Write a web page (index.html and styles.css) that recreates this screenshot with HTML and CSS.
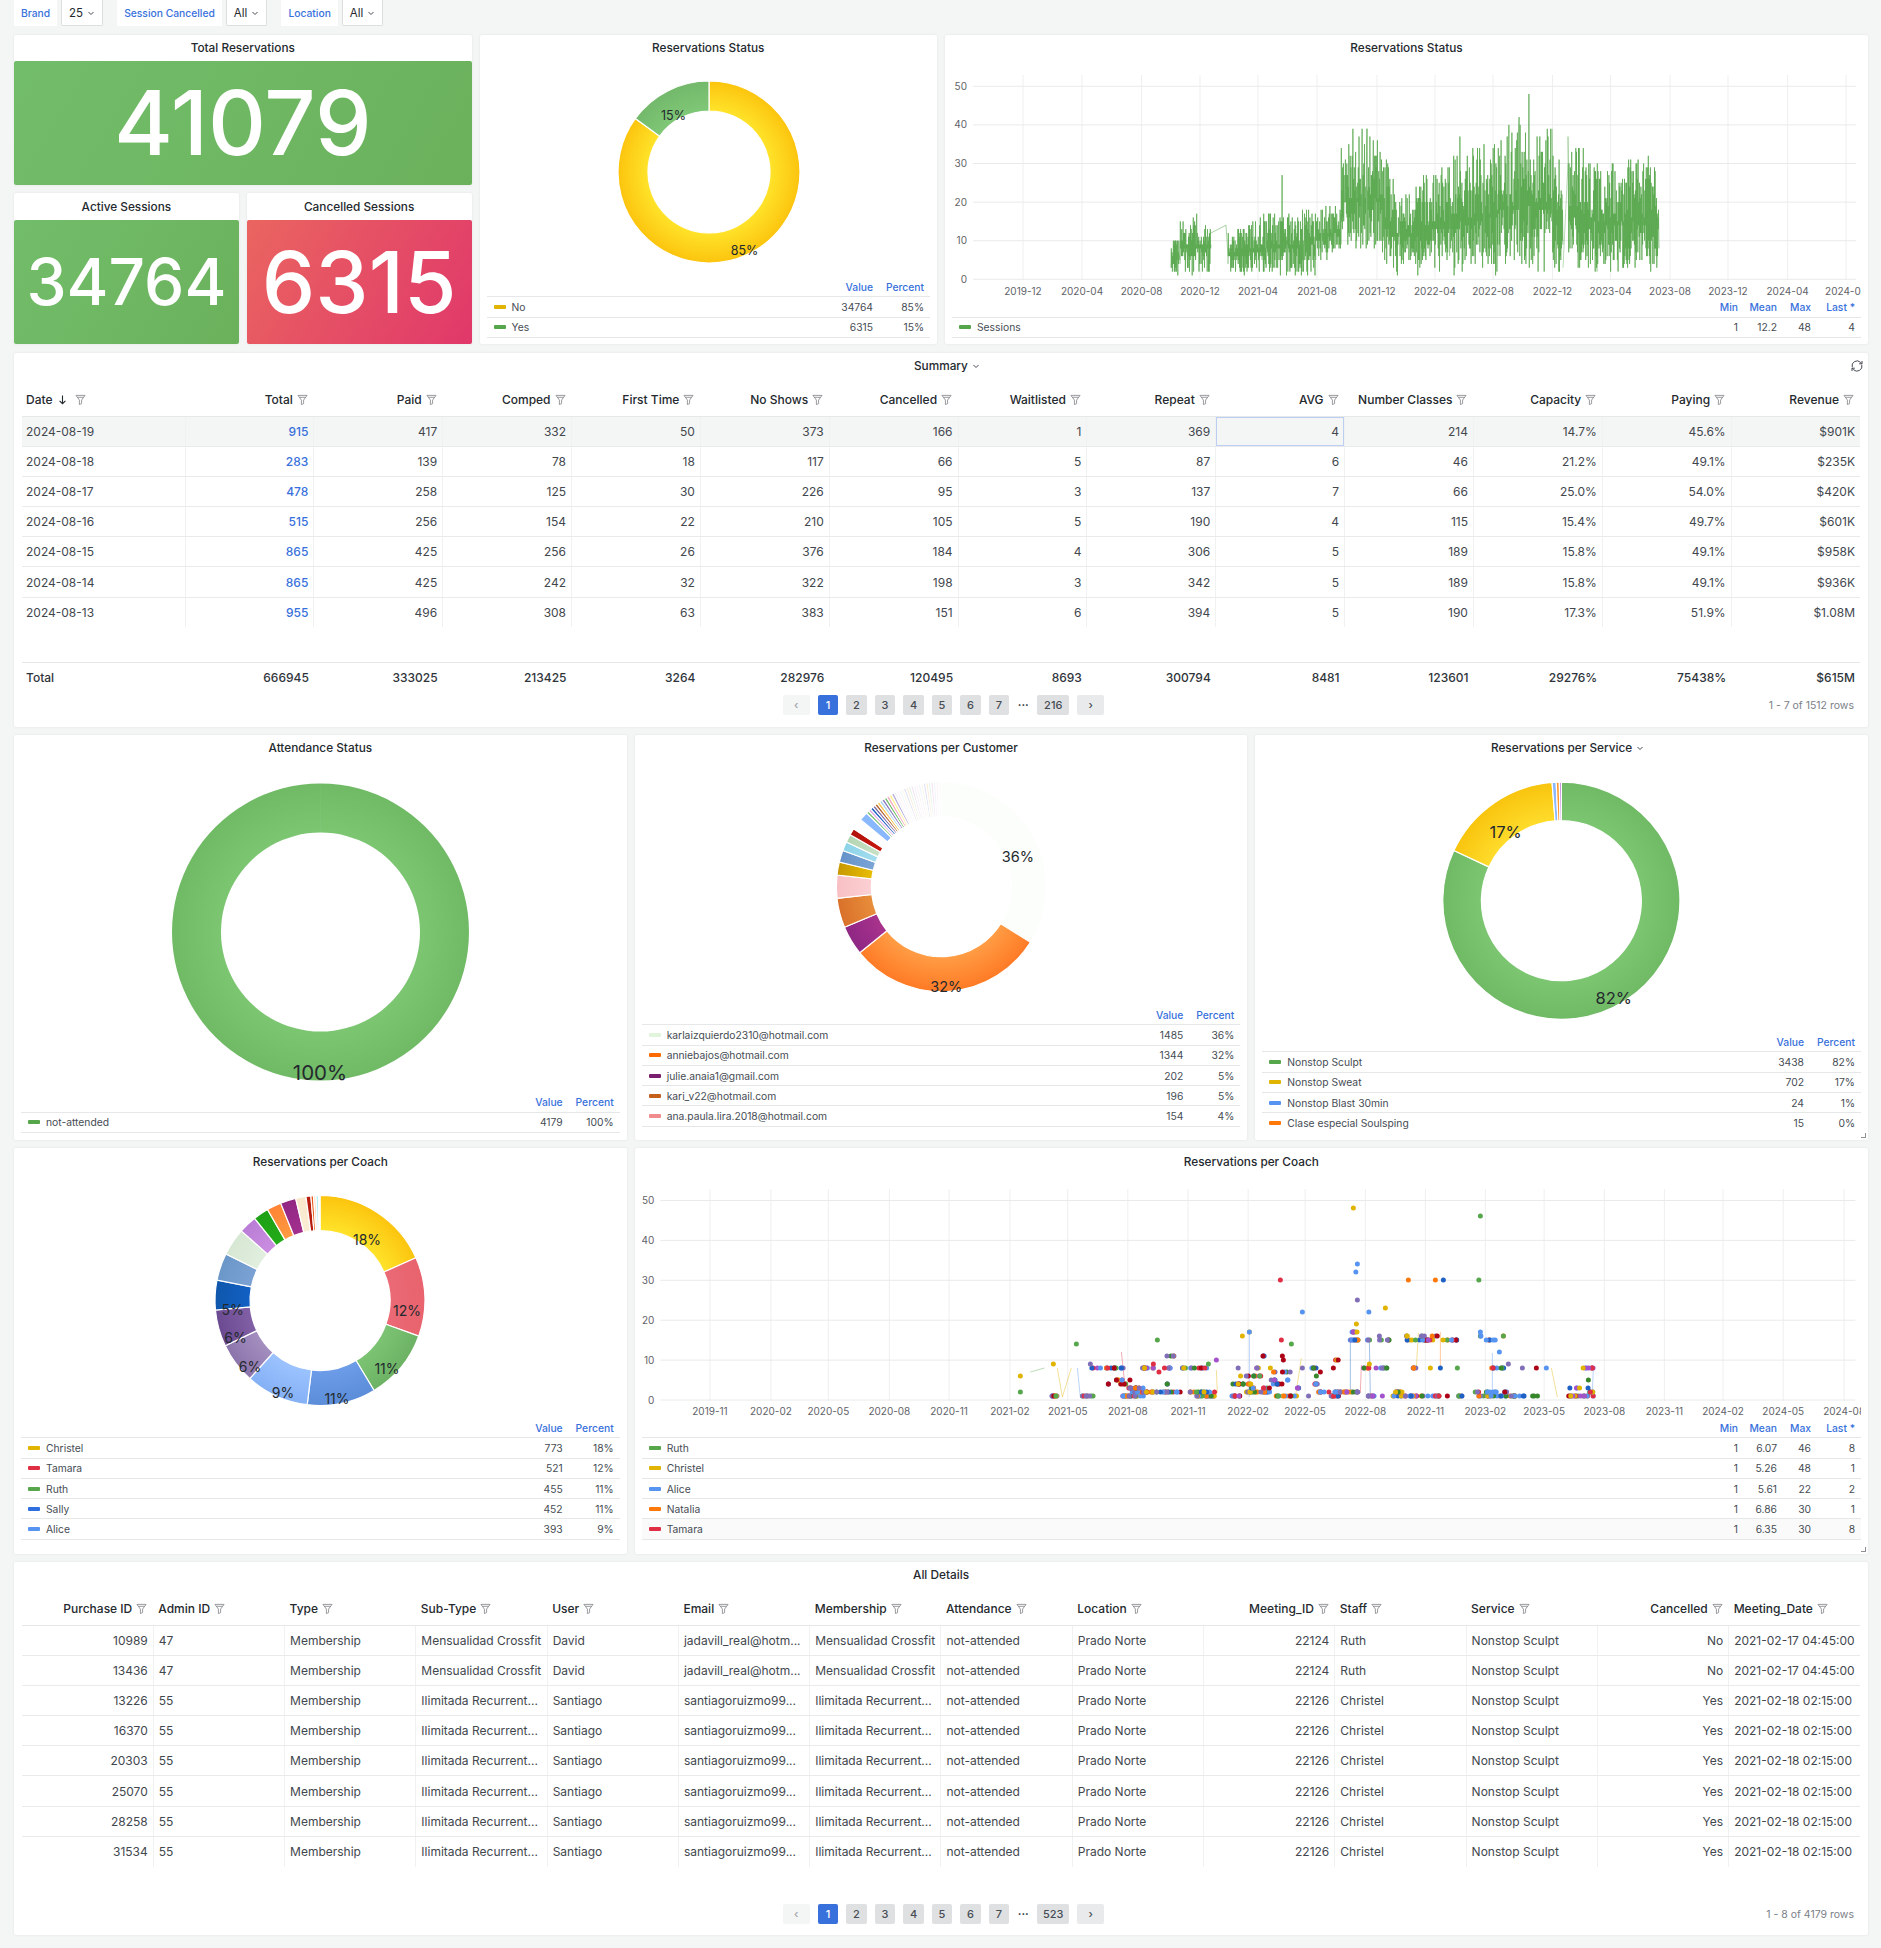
FILE: index.html
```html
<!DOCTYPE html>
<html>
  <head>
    <meta charset="utf-8">
    <title>Reservations</title>
    <link rel="stylesheet" href="styles.css">
  </head>
  <body>
    <div class="filters">
      <div class="filter-name">Brand</div>
      <div class="filter-value">25 <svg class="chev" viewBox="0 0 8 8"><path d="M1.5 3 4 5.5 6.5 3"/></svg></div>
      <div class="filter-name spaced">Session Cancelled</div>
      <div class="filter-value">All <svg class="chev" viewBox="0 0 8 8"><path d="M1.5 3 4 5.5 6.5 3"/></svg></div>
      <div class="filter-name spaced">Location</div>
      <div class="filter-value">All <svg class="chev" viewBox="0 0 8 8"><path d="M1.5 3 4 5.5 6.5 3"/></svg></div>
    </div>

    <main class="dash">
      <section class="panel total-res">
        <div class="title">Total Reservations</div>
        <div class="stat green huge">41079</div>
      </section>
      <section class="panel active-res">
        <div class="title">Active Sessions</div>
        <div class="stat green small">34764</div>
      </section>
      <section class="panel cancelled-res">
        <div class="title">Cancelled Sessions</div>
        <div class="stat red big">6315</div>
      </section>

      <section class="panel status-pie">
        <div class="title">Reservations Status</div>
        <div class="chart"><svg id="statusPie"></svg></div>
        <div class="legend pie" id="statusLegend"></div>
      </section>
      <section class="panel status-line">
        <div class="title">Reservations Status</div>
        <div class="chart"><svg id="statusLine"></svg></div>
        <div class="legend stats" id="lineLegend"></div>
      </section>

      <section class="panel summary">
        <div class="title">Summary <svg class="chev" viewBox="0 0 8 8"><path d="M1.5 3 4 5.5 6.5 3"/></svg>
          <svg class="refresh" viewBox="0 0 14 14"><path d="M2.2 8.2A5 5 0 0 1 10.6 3.4L12 4.8M11.8 5.8A5 5 0 0 1 3.4 10.6L2 9.2"/><path d="M12 2v2.8H9.2M2 12V9.2h2.8"/></svg>
        </div>
        <div class="table-box"><table class="grid" id="summaryTable"></table></div>
        <table class="grid totals" id="summaryTotals"></table>
        <div class="pager">
          <div class="pages" id="summaryPages"></div>
          <div class="count">1 - 7 of 1512 rows</div>
        </div>
      </section>

      <section class="panel attendance">
        <div class="title">Attendance Status</div>
        <div class="chart"><svg id="attendancePie"></svg></div>
        <div class="legend pie" id="attendanceLegend"></div>
      </section>
      <section class="panel customer">
        <div class="title">Reservations per Customer</div>
        <div class="chart"><svg id="customerPie"></svg></div>
        <div class="legend pie cut-five" id="customerLegend"></div>
      </section>
      <section class="panel service">
        <div class="title">Reservations per Service <svg class="chev" viewBox="0 0 8 8"><path d="M1.5 3 4 5.5 6.5 3"/></svg></div>
        <div class="chart"><svg id="servicePie"></svg></div>
        <div class="legend pie cut-four" id="serviceLegend"></div>
        <div class="resize"></div>
      </section>

      <section class="panel coach-pie">
        <div class="title">Reservations per Coach</div>
        <div class="chart"><svg id="coachPie"></svg></div>
        <div class="legend pie cut-five" id="coachLegend"></div>
      </section>
      <section class="panel coach-dots">
        <div class="title">Reservations per Coach</div>
        <div class="chart"><svg id="coachDots"></svg></div>
        <div class="legend stats cut-five" id="dotsLegend"></div>
        <div class="resize"></div>
      </section>

      <section class="panel details">
        <div class="title">All Details</div>
        <div class="table-box"><table class="grid" id="detailsTable"></table></div>
        <div class="pager">
          <div class="pages" id="detailsPages"></div>
          <div class="count">1 - 8 of 4179 rows</div>
        </div>
      </section>
    </main>

    <script src="app.js"></script>
  </body>
</html>
```

FILE: styles.css
```css
html {
  background: #f4f5f5;
  color: #24292e;
  font-family: Inter, "Liberation Sans", sans-serif;
  font-size: 12px;
}
body {
  margin: 0;
}
.filters {
  display: flex;
  height: 26px;
  margin-bottom: 9px;
  padding-left: 14px;
  font-size: 10.3px;
}
.filter-name {
  display: flex;
  align-items: center;
  margin-right: 4px;
  padding: 0 7px;
  background: white;
  color: #3871dc;
  font-weight: 500;
}
.filter-name.spaced {
  margin-left: 14px;
}
.filter-value {
  display: flex;
  align-items: center;
  gap: 4px;
  padding: 0 7px;
  background: white;
  border: 1px solid #dcdee0;
  border-top: 0;
  border-radius: 0 0 2px 2px;
  font-size: 11.5px;
}
.chev {
  width: 8px;
  height: 8px;
  fill: none;
  stroke: #464c54;
  stroke-width: 1;
}

.dash {
  display: grid;
  grid-template-columns: repeat(24, 1fr);
  grid-template-rows: 150px 152px 374px 405px 406px 373px;
  gap: 8px;
  padding: 0 13px 13px 14px;
}
.panel {
  display: flex;
  flex-direction: column;
  position: relative;
  min-width: 0;
  background: white;
  border-radius: 2px;
  box-shadow: 0 0 3px rgba(36, 41, 46, 0.08);
}
.total-res { grid-column: 1 / span 6; grid-row: 1; }
.active-res { grid-column: 1 / span 3; grid-row: 2; margin-bottom: 1px; }
.cancelled-res { grid-column: 4 / span 3; grid-row: 2; margin-bottom: 1px; }
.status-pie { grid-column: 7 / span 6; grid-row: 1 / span 2; margin-bottom: 1px; }
.status-line { grid-column: 13 / span 12; grid-row: 1 / span 2; margin-bottom: 1px; }
.summary { grid-column: 1 / -1; }
.attendance, .customer, .service, .coach-pie { grid-column: span 8; }
.coach-dots { grid-column: span 16; }
.details { grid-column: 1 / -1; }

.title {
  flex: none;
  position: relative;
  height: 26px;
  line-height: 26px;
  text-align: center;
  font-size: 11.8px;
  font-weight: 500;
}
.active-res .title, .cancelled-res .title {
  height: 27px;
  line-height: 28px;
}
.coach-pie .title, .coach-dots .title {
  line-height: 28px;
}
.title .chev {
  margin: 0 -12px 0 1px;
}
.refresh {
  position: absolute;
  top: 6px;
  right: 4px;
  width: 14px;
  height: 14px;
  fill: none;
  stroke: #464c54;
  stroke-width: 1;
}

.stat {
  flex: 1;
  display: flex;
  justify-content: center;
  align-items: center;
  color: white;
  font-weight: 500;
  line-height: 1;
  border-radius: 2px;
}
.stat.green {
  background: linear-gradient(120deg, #72bd6a, #6bb15c);
}
.stat.red {
  background: linear-gradient(120deg, #ea6560, #e0386a);
}
.stat.huge { font-size: 90px; }
.stat.small { font-size: 64px; }
.stat.big { font-size: 85px; }

.chart {
  flex: 1;
  min-height: 0;
  margin: 0 7px;
}
.chart svg {
  display: block;
  width: 100%;
  height: 100%;
}
.axis {
  fill: #5f6369;
  font-size: 10px;
}
.slice-label {
  fill: #24292e;
  text-anchor: middle;
  dominant-baseline: central;
}

.legend {
  flex: none;
  margin: 0 7px 7px;
  overflow: hidden;
  font-size: 10.3px;
  color: #464c54;
}
.status-pie .legend, .status-line .legend {
  margin-bottom: 6px;
}
.legend.cut-five { height: 127px; margin-bottom: 8px; }
.legend.cut-four { height: 100px; margin-bottom: 8px; }
.coach-pie .legend.cut-five, .coach-dots .legend.cut-five { height: 128px; }
.legend-row {
  display: grid;
  align-items: center;
  box-sizing: border-box;
  height: 20.3px;
  border-bottom: 1px solid #e6e7e8;
}
.legend.pie .legend-row {
  grid-template-columns: 1fr 60px 51px;
}
.legend.stats .legend-row {
  grid-template-columns: 1fr 32px 39px 34px 44px;
}
.legend-row > div {
  padding-right: 6px;
  text-align: right;
  white-space: nowrap;
}
.legend-row > .legend-name {
  display: flex;
  align-items: center;
  gap: 6px;
  padding-left: 7px;
  text-align: left;
}
.legend-row.head {
  color: #3871dc;
  font-weight: 500;
}
#dotsLegend .legend-row:nth-child(6) {
  background: #fafafa;
}
.swatch {
  width: 12px;
  height: 4px;
  border-radius: 1px;
}
.resize {
  position: absolute;
  right: 2px;
  bottom: 2px;
  width: 4px;
  height: 4px;
  border-right: 1px solid #8e9095;
  border-bottom: 1px solid #8e9095;
}

.table-box {
  flex: 1;
  min-height: 0;
  margin: 0 8px;
}
table.grid {
  table-layout: fixed;
  border-collapse: collapse;
  width: 100%;
  color: #42474e;
  font-size: 12px;
}
table.grid th {
  height: 37px;
  padding: 4px 6px 0 5px;
  box-sizing: border-box;
  border-bottom: 1px solid #e6e7e8;
  color: #24292e;
  font-weight: 500;
  text-align: left;
  white-space: nowrap;
}
table.grid td {
  height: 30.2px;
  padding: 0 5px;
  box-sizing: border-box;
  border-bottom: 1px solid #e9eaeb;
  border-right: 1px solid #f0f1f1;
  white-space: nowrap;
  overflow: hidden;
}
table.grid tr:last-child td {
  border-bottom: 0;
}
table.grid td:last-child {
  border-right: 0;
}
table.grid .num {
  text-align: right;
}
table.grid .first {
  padding-left: 4px;
}
table.grid tr.hover td {
  background: #f4f5f5;
}
table.grid td.focus {
  box-shadow: inset 0 0 0 1px #bccff3;
}
table.grid td.link {
  color: #3871dc;
  font-weight: 500;
}
.head-cell {
  display: inline-flex;
  align-items: center;
  gap: 4px;
  vertical-align: middle;
}
.funnel {
  width: 11px;
  height: 11px;
  fill: none;
  stroke: #8e9095;
  stroke-width: 1;
}
.sort {
  width: 11px;
  height: 11px;
  margin-right: 3px;
  fill: none;
  stroke: #24292e;
  stroke-width: 1.2;
}
table.totals {
  flex: none;
  width: auto;
  margin: 0 8px;
  border-top: 1px solid #e6e7e8;
}
table.totals td {
  height: 30px;
  border: 0;
  color: #2f343a;
  font-weight: 500;
}

.pager {
  flex: none;
  display: grid;
  grid-template-columns: 1fr auto 1fr;
  align-items: center;
  height: 20px;
  margin: 3px 14px 12px 14px;
}
.details .pager {
  margin-bottom: 11px;
}
.pages {
  grid-column: 2;
  display: flex;
  align-items: center;
  gap: 8px;
  margin-left: 5px;
  font-size: 11px;
}
.page {
  display: flex;
  justify-content: center;
  align-items: center;
  min-width: 20.5px;
  height: 20px;
  padding: 0 1px;
  box-sizing: border-box;
  background: #dfe0e2;
  border-radius: 2px;
  color: #464c54;
  font-weight: 500;
}
.page.wide { min-width: 32px; }
.page.on {
  background: #3871dc;
  color: white;
}
.page.arrow {
  min-width: 27px;
  background: #e9eaeb;
}
.page.arrow.off {
  background: #f4f5f5;
  color: #a0a3a8;
}
.page-dots {
  width: 12px;
  text-align: center;
  font-weight: 700;
}
.count {
  grid-column: 3;
  text-align: right;
  color: #7b8087;
  font-size: 10.5px;
}
```

FILE: app.js
```js
// seeded so the charts come out the same on every load
let seed = 20240819
function rand() {
  seed = (seed * 16807) % 2147483647
  return seed / 2147483647
}
function between(a, b) {
  return a + (b - a) * rand()
}

const funnel = '<svg class="funnel" viewBox="0 0 12 12"><path d="M1 1.5h10L7.2 6.6v3.9l-2.4 1V6.6Z"/><path d="M2.6 3.6h6.8"/></svg>'
const sortDown = '<svg class="sort" viewBox="0 0 12 12"><path d="M6 1.5v9M2.8 7.4 6 10.6l3.2-3.2"/></svg>'

/* ---------- tables ---------- */

const summaryCols = ['Date', 'Total', 'Paid', 'Comped', 'First Time', 'No Shows', 'Cancelled', 'Waitlisted', 'Repeat', 'AVG', 'Number Classes', 'Capacity', 'Paying', 'Revenue']
const summaryRows = [
  ['2024-08-19', 915, 417, 332, 50, 373, 166, 1, 369, 4, 214, '14.7%', '45.6%', '$901K'],
  ['2024-08-18', 283, 139, 78, 18, 117, 66, 5, 87, 6, 46, '21.2%', '49.1%', '$235K'],
  ['2024-08-17', 478, 258, 125, 30, 226, 95, 3, 137, 7, 66, '25.0%', '54.0%', '$420K'],
  ['2024-08-16', 515, 256, 154, 22, 210, 105, 5, 190, 4, 115, '15.4%', '49.7%', '$601K'],
  ['2024-08-15', 865, 425, 256, 26, 376, 184, 4, 306, 5, 189, '15.8%', '49.1%', '$958K'],
  ['2024-08-14', 865, 425, 242, 32, 322, 198, 3, 342, 5, 189, '15.8%', '49.1%', '$936K'],
  ['2024-08-13', 955, 496, 308, 63, 383, 151, 6, 394, 5, 190, '17.3%', '51.9%', '$1.08M']
]
const summaryTotal = ['Total', 666945, 333025, 213425, 3264, 282976, 120495, 8693, 300794, 8481, 123601, '29276%', '75438%', '$615M']

function colgroup(widths) {
  return '<colgroup>' + widths.map(w => `<col width="${w}">`).join('') + '</colgroup>'
}

const summaryWidths = [163].concat(Array(13).fill(128.85))
function fillSummary() {
  const head = summaryCols.map((name, i) => {
    if (i === 0) {
      return `<th class="first"><span class="head-cell">${name}${sortDown}${funnel}</span></th>`
    }
    return `<th class="num"><span class="head-cell">${name}${funnel}</span></th>`
  }).join('')
  const body = summaryRows.map((row, r) => {
    const cells = row.map((val, i) => {
      let cls = i === 0 ? 'first' : 'num'
      if (i === 1) cls += ' link'
      if (r === 0 && i === 9) cls += ' focus'
      return `<td class="${cls}">${val}</td>`
    }).join('')
    return `<tr class="${r === 0 ? 'hover' : ''}">${cells}</tr>`
  }).join('')
  document.getElementById('summaryTable').innerHTML = colgroup(summaryWidths) + `<tr>${head}</tr>` + body
  const totals = summaryTotal.map((val, i) => `<td class="${i === 0 ? 'first' : 'num'}">${val}</td>`).join('')
  const totalsTable = document.getElementById('summaryTotals')
  totalsTable.innerHTML = colgroup(summaryWidths) + `<tr>${totals}</tr>`
  totalsTable.style.width = '1838px'
}

const detailCols = ['Purchase ID', 'Admin ID', 'Type', 'Sub-Type', 'User', 'Email', 'Membership', 'Attendance', 'Location', 'Meeting_ID', 'Staff', 'Service', 'Cancelled', 'Meeting_Date']
const detailRight = [0, 9, 12]
const david = [47, 'Membership', 'Mensualidad Crossfit', 'David', 'jadavill_real@hotm...', 'Mensualidad Crossfit', 'not-attended', 'Prado Norte', 22124, 'Ruth', 'Nonstop Sculpt', 'No', '2021-02-17 04:45:00']
const santiago = [55, 'Membership', 'Ilimitada Recurrent...', 'Santiago', 'santiagoruizmo99...', 'Ilimitada Recurrent...', 'not-attended', 'Prado Norte', 22126, 'Christel', 'Nonstop Sculpt', 'Yes', '2021-02-18 02:15:00']
const detailRows = [
  [10989, ...david],
  [13436, ...david],
  [13226, ...santiago],
  [16370, ...santiago],
  [20303, ...santiago],
  [25070, ...santiago],
  [28258, ...santiago],
  [31534, ...santiago]
]

function fillDetails() {
  const head = detailCols.map((name, i) => {
    const cls = detailRight.includes(i) ? 'num' : ''
    return `<th class="${cls}"><span class="head-cell">${name}${funnel}</span></th>`
  }).join('')
  const body = detailRows.map(row => {
    const cells = row.map((val, i) => `<td class="${detailRight.includes(i) ? 'num' : ''}">${val}</td>`).join('')
    return `<tr>${cells}</tr>`
  }).join('')
  document.getElementById('detailsTable').innerHTML = `<tr>${head}</tr>` + body
}

function fillPages(id, last) {
  let html = '<div class="page arrow off">‹</div><div class="page on">1</div>'
  for (let i = 2; i <= 7; i++) {
    html += `<div class="page">${i}</div>`
  }
  html += `<div class="page-dots">···</div><div class="page wide">${last}</div><div class="page arrow">›</div>`
  document.getElementById(id).innerHTML = html
}

/* ---------- legends ---------- */

function fillLegend(id, cols, rows) {
  let html = '<div class="legend-row head"><div></div>' + cols.map(c => `<div>${c}</div>`).join('') + '</div>'
  rows.forEach(row => {
    const [color, name, ...vals] = row
    html += `<div class="legend-row"><div class="legend-name"><span class="swatch" style="background:${color}"></span>${name}</div>`
    html += vals.map(v => `<div>${v}</div>`).join('') + '</div>'
  })
  document.getElementById(id).innerHTML = html
}

/* ---------- svg helpers ---------- */

// the viewBox is the element's place on the page, so charts are drawn in page pixels
function frame(id) {
  const svg = document.getElementById(id)
  const box = svg.getBoundingClientRect()
  svg.setAttribute('viewBox', `${box.left} ${box.top} ${box.width} ${box.height}`)
  return svg
}

function polar(cx, cy, r, deg) {
  const a = (deg - 90) * Math.PI / 180
  return [cx + r * Math.cos(a), cy + r * Math.sin(a)]
}

function sector(cx, cy, ro, ri, from, to) {
  const big = to - from > 180 ? 1 : 0
  const [x1, y1] = polar(cx, cy, ro, from)
  const [x2, y2] = polar(cx, cy, ro, to)
  const [x3, y3] = polar(cx, cy, ri, to)
  const [x4, y4] = polar(cx, cy, ri, from)
  return `M${x1} ${y1}A${ro} ${ro} 0 ${big} 1 ${x2} ${y2}L${x3} ${y3}A${ri} ${ri} 0 ${big} 0 ${x4} ${y4}Z`
}

function drawDonut(id, opts) {
  const { cx, cy, ro, ri, slices, labels, size } = opts
  let defs = ''
  let paths = ''
  let from = 0
  const stroke = opts.stroke === undefined ? 1.2 : opts.stroke
  slices.forEach((s, i) => {
    const [to, light, dark] = s
    const gid = `${id}-g${i}`
    defs += `<radialGradient id="${gid}" gradientUnits="userSpaceOnUse" cx="${cx}" cy="${cy}" r="${ro}">`
    defs += `<stop offset="${ri / ro}" stop-color="${light}"/><stop offset="1" stop-color="${dark || light}"/></radialGradient>`
    paths += `<path d="${sector(cx, cy, ro, ri, from, to)}" fill="url(#${gid})" stroke="white" stroke-width="${stroke}"/>`
    from = to
  })
  const texts = labels.map(l => `<text class="slice-label" x="${l[1]}" y="${l[2]}" font-size="${size}">${l[0]}</text>`).join('')
  frame(id).innerHTML = `<defs>${defs}</defs>${paths}${texts}`
}

function drawAxes(opts) {
  const { left, right, top, bottom, yLine, yLabelX, xLines, xLabelY } = opts
  let html = ''
  xLines.forEach(l => {
    html += `<line x1="${l[0]}" x2="${l[0]}" y1="${top}" y2="${bottom}" stroke="#eeeff0"/>`
    html += `<text class="axis" x="${l[0]}" y="${xLabelY}" text-anchor="middle">${l[1]}</text>`
  })
  yLine.forEach(l => {
    html += `<line x1="${left}" x2="${right}" y1="${l[1]}" y2="${l[1]}" stroke="#e9eaeb"/>`
    html += `<text class="axis" x="${yLabelX}" y="${l[1] + 3.5}" text-anchor="end">${l[0]}</text>`
  })
  return html
}

/* ---------- reservations status line ---------- */

function drawStatusLine() {
  const svg = frame('statusLine')
  const months = ['2019-12', '2020-04', '2020-08', '2020-12', '2021-04', '2021-08', '2021-12', '2022-04', '2022-08', '2022-12', '2023-04', '2023-08', '2023-12', '2024-04', '2024-08']
  const xPos = [1023, 1082, 1141.6, 1200, 1258, 1317, 1377, 1435, 1493, 1552.5, 1610.6, 1670, 1728, 1787.6, 1846]
  let html = drawAxes({
    left: 973,
    right: 1856,
    top: 75,
    bottom: 280,
    yLabelX: 967,
    xLabelY: 295,
    xLines: months.map((m, i) => [xPos[i], m]),
    yLine: [0, 10, 20, 30, 40, 50].map(v => [v, 279.3 - v * 3.86])
  })
  const yOf = v => 279.3 - v * 3.86
  // x from, x to, peak at start, peak at end, low
  const stretches = [
    [1171, 1180, 10, 13, 1],
    [1180, 1211, 18, 18, 1],
    [1228, 1262, 12, 16, 1],
    [1262, 1316, 17, 19, 1],
    [1316, 1341, 18, 21, 5],
    [1341, 1384, 36, 39, 7],
    [1384, 1396, 33, 24, 3],
    [1396, 1450, 24, 31, 1],
    [1450, 1498, 32, 37, 1],
    [1498, 1552, 38, 42, 2],
    [1552, 1563, 39, 27, 1],
    [1568, 1597, 37, 32, 2],
    [1597, 1659, 30, 33, 2]
  ]
  const spikes = { 1282: 27, 1529: 48, 1519: 42, 1509: 40, 1552: 39, 1568: 37, 1460: 37, 1484: 35, 1353: 39, 1362: 39, 1367: 39 }
  stretches.forEach(s => {
    const pts = []
    let i = 0
    for (let x = s[0]; x <= s[1]; x += 0.34) {
      const t = (x - s[0]) / (s[1] - s[0])
      const top = s[2] + (s[3] - s[2]) * t
      const mid = s[4] + (top - s[4]) * 0.45
      // swing between the lower and upper half so the middle of the band fills in
      let v
      if (i % 2 === 0) {
        v = s[4] + (mid - s[4]) * Math.pow(rand(), 0.9)
      } else {
        v = mid + (top - mid) * Math.pow(rand(), 1.1)
      }
      const key = Math.round(x)
      if (spikes[key] && Math.abs(x - key) < 0.18) v = spikes[key]
      pts.push(`${x.toFixed(1)},${yOf(Math.round(v)).toFixed(1)}`)
      i++
    }
    html += `<polyline points="${pts.join(' ')}" fill="none" stroke="#56a64b" stroke-opacity="0.72"/>`
  })
  // the sparse joins between stretches
  html += `<polyline points="1211,${yOf(12)} 1226,${yOf(14)} 1228,${yOf(6)}" fill="none" stroke="#56a64b" stroke-opacity="0.5"/>`
  html += `<polyline points="1563,${yOf(3)} 1568,${yOf(30)}" fill="none" stroke="#56a64b" stroke-opacity="0.4"/>`
  svg.innerHTML = html
}

/* ---------- reservations per coach dots ---------- */

function drawCoachDots() {
  const svg = frame('coachDots')
  const months = ['2019-11', '2020-02', '2020-05', '2020-08', '2020-11', '2021-02', '2021-05', '2021-08', '2021-11', '2022-02', '2022-05', '2022-08', '2022-11', '2023-02', '2023-05', '2023-08', '2023-11', '2024-02', '2024-05', '2024-08']
  const xPos = [709.6, 770.6, 828, 889, 948.7, 1009.6, 1067.4, 1127.5, 1187.7, 1247.8, 1304.8, 1365, 1425, 1485, 1543.8, 1604, 1664, 1722.7, 1782.9, 1843.8]
  let html = drawAxes({
    left: 660,
    right: 1855,
    top: 1189,
    bottom: 1401,
    yLabelX: 654,
    xLabelY: 1415,
    xLines: months.map((m, i) => [xPos[i], m]),
    yLine: [0, 10, 20, 30, 40, 50].map(v => [v, 1400 - v * 3.99])
  })
  const lines = [
    ['#e0b400', '1057,1368 1062,1397 1071,1368'],
    ['#5794f2', '1077,1368 1080,1397'],
    ['#e02f44', '1121,1352 1124,1380'],
    ['#e0b400', '1216,1370 1217,1393'],
    ['#5794f2', '1249,1332 1249,1397'],
    ['#e0b400', '1295,1397 1301,1358'],
    ['#1f60c4', '1350,1340 1350,1392'],
    ['#1f60c4', '1369,1340 1370,1397'],
    ['#e02f44', '1361,1365 1360,1393'],
    ['#e0b400', '1418,1333 1416,1368'],
    ['#ff780a', '1440,1332 1440,1368'],
    ['#5794f2', '1492,1353 1492,1392'],
    ['#e0b400', '1551,1368 1557,1397'],
    ['#5794f2', '1593,1368 1592,1392'],
    ['#56a64b', '1030,1372 1044,1368']
  ]
  lines.forEach(l => {
    html += `<polyline points="${l[1]}" fill="none" stroke="${l[0]}" stroke-opacity="0.4"/>`
  })
  const palette = ['#e0b400', '#5794f2', '#56a64b', '#e02f44', '#806eb7', '#1f60c4', '#a352cc', '#37872d', '#ad0317', '#ff780a', '#5794f2', '#806eb7']
  const dot = (x, v, color) => {
    html += `<circle cx="${x.toFixed(1)}" cy="${(1400 - v * 4).toFixed(1)}" r="2.5" fill="${color}"/>`
  }
  // value, then stretches of x from, x to, how many dots
  const bands = [
    [1, [[1051, 1058, 6], [1078, 1093, 7], [1122, 1143, 14], [1193, 1216, 12], [1231, 1243, 6], [1274, 1297, 10], [1308, 1309, 1], [1328, 1339, 6], [1366, 1374, 5], [1382, 1382, 1], [1389, 1439, 22], [1447, 1447, 1], [1456, 1462, 4], [1478, 1524, 22], [1532, 1540, 2], [1564, 1593, 12]]],
    [2, [[1131, 1180, 22], [1189, 1216, 10], [1243, 1270, 14], [1312, 1358, 20], [1395, 1408, 6], [1474, 1508, 10], [1586, 1593, 3]]],
    [3, [[1128, 1145, 8], [1250, 1270, 6], [1296, 1300, 2], [1564, 1590, 3]]],
    [4, [[1108, 1108, 2], [1120, 1128, 4], [1166, 1168, 2], [1232, 1255, 10], [1270, 1285, 5], [1314, 1318, 3]]],
    [5, [[1115, 1130, 5], [1270, 1290, 4], [1588, 1588, 1]]],
    [6, [[1240, 1270, 6], [1316, 1316, 1]]],
    [7, [[1272, 1290, 4], [1155, 1160, 1], [1320, 1320, 1]]],
    [8, [[1091, 1128, 12], [1141, 1155, 9], [1162, 1172, 3], [1182, 1208, 9], [1237, 1238, 1], [1255, 1258, 2], [1270, 1270, 1], [1302, 1302, 1], [1310, 1316, 3], [1333, 1333, 1], [1362, 1389, 8], [1412, 1416, 3], [1430, 1430, 1], [1440, 1440, 1], [1457, 1457, 1], [1491, 1507, 6], [1522, 1522, 1], [1536, 1536, 1], [1546, 1546, 1], [1582, 1593, 5]]],
    [9, [[1090, 1090, 1], [1153, 1153, 1], [1208, 1208, 1], [1369, 1369, 1], [1508, 1508, 1]]],
    [10, [[1216, 1216, 1], [1335, 1340, 2], [1283, 1283, 1]]],
    [11, [[1166, 1175, 3], [1262, 1265, 2], [1282, 1282, 1]]],
    [15, [[1349, 1358, 6], [1365, 1370, 2], [1378, 1390, 4], [1405, 1458, 18], [1480, 1496, 3]]],
    [16, [[1378, 1380, 1], [1406, 1407, 2], [1420, 1440, 4], [1480, 1481, 2], [1503, 1503, 1]]],
    [17, [[1351, 1358, 3], [1480, 1481, 1], [1249, 1249, 1]]]
  ]
  bands.forEach(band => {
    band[1].forEach(s => {
      const many = s[2] > 1 ? Math.ceil(s[2] * 1.4) : 1
      for (let i = 0; i < many; i++) {
        dot(between(s[0], s[1]), band[0], palette[Math.floor(rand() * palette.length)])
      }
    })
  })
  // the ones that stand alone
  const strays = [
    [1353, 48, '#e0b400'], [1480, 46, '#56a64b'], [1357, 34, '#5794f2'], [1355.5, 32, '#5794f2'],
    [1280, 30, '#e02f44'], [1408, 30, '#ff780a'], [1435, 30, '#ff780a'], [1443, 30, '#1f60c4'], [1478.5, 30, '#56a64b'],
    [1357, 25, '#806eb7'], [1302, 22, '#5794f2'], [1368.5, 22, '#5794f2'], [1385, 23, '#e0b400'], [1356, 19, '#e0b400'],
    [1076, 14, '#56a64b'], [1157, 15, '#56a64b'], [1242, 16, '#e0b400'], [1249, 17, '#5794f2'], [1281, 15, '#e02f44'], [1291, 14, '#56a64b'],
    [1020, 6, '#e0b400'], [1020, 2, '#56a64b'], [1053, 9, '#e0b400'], [1503, 16, '#56a64b'], [1499, 12, '#5794f2']
  ]
  strays.forEach(s => dot(s[0], s[1], s[2]))
  svg.innerHTML = html
}

/* ---------- pies ---------- */

function thinSlices() {
  // the long tail of the customer pie
  const strong = ['#73bf69', '#e5a8e2', '#1f60c4', '#7f6ba5', '#b0602a', '#fcc24e', '#a9d6ec', '#8e7cc3', '#73bf69', '#f6a8c0', '#fff099', '#b7b0dc']
  const pale = ['#dfe3f5', '#fbeedd', '#e6f5e8', '#f4e4f4', '#f3f3fb', '#fdf3f6', '#f0f6fb', '#faf7ee']
  const out = []
  let a = 314.6
  strong.forEach(c => {
    a += 1.55
    out.push([a, c])
  })
  while (a < 358) {
    a += 1.4
    out.push([a, pale[out.length % pale.length]])
  }
  out.push([360, '#fbfdfb'])
  return out
}

function drawPies() {
  drawDonut('statusPie', {
    cx: 708.5, cy: 172, ro: 91, ri: 61, size: 12.5,
    slices: [[306, '#ffe32a', '#fcc40e'], [360, '#7fc877', '#73b86b']],
    labels: [['85%', 744, 250], ['15%', 673, 115]]
  })
  drawDonut('attendancePie', {
    cx: 320.5, cy: 932, ro: 148.5, ri: 99.5, size: 20.5, stroke: 0,
    slices: [[359.99, '#7cc672', '#70ba66']],
    labels: [['100%', 320, 1072]]
  })
  drawDonut('customerPie', {
    cx: 941, cy: 886.7, ro: 105, ri: 70, size: 14.5,
    slices: [
      [122, '#fcfefb'],
      [231, '#ff9d45', '#ff7a25'],
      [247.3, '#a9338c', '#8e2784'],
      [263.6, '#e88e3b', '#d9702a'],
      [276.4, '#fbd0d3', '#f8bfc3'],
      [283.6, '#e8bd00', '#c79800'],
      [290.2, '#7ba4d6', '#6593c9'],
      [295.2, '#a4dcee', '#8cd3e8'],
      [299.7, '#c9e2c7', '#b4d5b2'],
      [303.5, '#c8170d', '#b0120a'],
      [309.7, '#ffffff'],
      [314.6, '#8ab8ff'],
      ...thinSlices()
    ],
    labels: [['36%', 1017.5, 856], ['32%', 946, 986.7]]
  })
  drawDonut('servicePie', {
    cx: 1561.7, cy: 900.7, ro: 118.6, ri: 80, size: 16.5,
    slices: [
      [295, '#7cc672', '#70ba66'],
      [355.5, '#ffdc2c', '#f8c40e'],
      [357.5, '#8ab8ff'],
      [359, '#ff9830'],
      [360, '#b877d9']
    ],
    labels: [['82%', 1614, 997.6], ['17%', 1506, 832]]
  })
  drawDonut('coachPie', {
    cx: 320, cy: 1300.5, ro: 105, ri: 70, size: 14,
    slices: [
      [66, '#ffe32a', '#fcc40e'],
      [109.8, '#ea6a75', '#e8636e'],
      [149, '#7cc474', '#6db264'],
      [187, '#6d9ce8', '#5b8dd9'],
      [222, '#9cc3ff', '#84b0f5'],
      [244.5, '#a48fc0', '#8b74ab'],
      [264.8, '#8160a5', '#6b4a92'],
      [281.2, '#1260c4', '#0f57ac'],
      [296.3, '#7ca2d4', '#6a97c8'],
      [311.5, '#e2efdf', '#d6e7d3'],
      [321.5, '#ca8de0', '#b97dd6'],
      [330, '#22ab18', '#1fa016'],
      [338, '#ff9a42', '#ff8433'],
      [346.6, '#a32f8e', '#912884'],
      [352.3, '#fbedd4', '#f9e8cb'],
      [355, '#b61d0e'],
      [356.5, '#e85a1e'],
      [357.8, '#fbd9c4'],
      [359.2, '#b8f0f8'],
      [360, '#ffffff']
    ],
    labels: [['18%', 367, 1239], ['12%', 407, 1310], ['11%', 387, 1368.7], ['11%', 337, 1398], ['9%', 283, 1392.7], ['6%', 250, 1366.7], ['6%', 235.5, 1337], ['5%', 232.6, 1309]]
  })
}

/* ---------- start ---------- */

fillSummary()
fillDetails()
fillPages('summaryPages', 216)
fillPages('detailsPages', 523)

const pieCols = ['Value', 'Percent']
const statCols = ['Min', 'Mean', 'Max', 'Last *']
fillLegend('statusLegend', pieCols, [
  ['#e0b400', 'No', 34764, '85%'],
  ['#56a64b', 'Yes', 6315, '15%']
])
fillLegend('lineLegend', statCols, [['#56a64b', 'Sessions', 1, 12.2, 48, 4]])
fillLegend('attendanceLegend', pieCols, [['#56a64b', 'not-attended', 4179, '100%']])
fillLegend('customerLegend', pieCols, [
  ['#e0f5db', 'karlaizquierdo2310@hotmail.com', 1485, '36%'],
  ['#ff6a00', 'anniebajos@hotmail.com', 1344, '32%'],
  ['#7a1f70', 'julie.anaia1@gmail.com', 202, '5%'],
  ['#c4601b', 'kari_v22@hotmail.com', 196, '5%'],
  ['#f08c8e', 'ana.paula.lira.2018@hotmail.com', 154, '4%']
])
fillLegend('serviceLegend', pieCols, [
  ['#56a64b', 'Nonstop Sculpt', 3438, '82%'],
  ['#e0b400', 'Nonstop Sweat', 702, '17%'],
  ['#5794f2', 'Nonstop Blast 30min', 24, '1%'],
  ['#ff780a', 'Clase especial Soulsping', 15, '0%']
])
fillLegend('coachLegend', pieCols, [
  ['#e0b400', 'Christel', 773, '18%'],
  ['#e02f44', 'Tamara', 521, '12%'],
  ['#56a64b', 'Ruth', 455, '11%'],
  ['#2f6fe0', 'Sally', 452, '11%'],
  ['#5794f2', 'Alice', 393, '9%']
])
fillLegend('dotsLegend', statCols, [
  ['#56a64b', 'Ruth', 1, 6.07, 46, 8],
  ['#e0b400', 'Christel', 1, 5.26, 48, 1],
  ['#5794f2', 'Alice', 1, 5.61, 22, 2],
  ['#ff780a', 'Natalia', 1, 6.86, 30, 1],
  ['#e02f44', 'Tamara', 1, 6.35, 30, 8]
])

drawPies()
drawStatusLine()
drawCoachDots()
```
